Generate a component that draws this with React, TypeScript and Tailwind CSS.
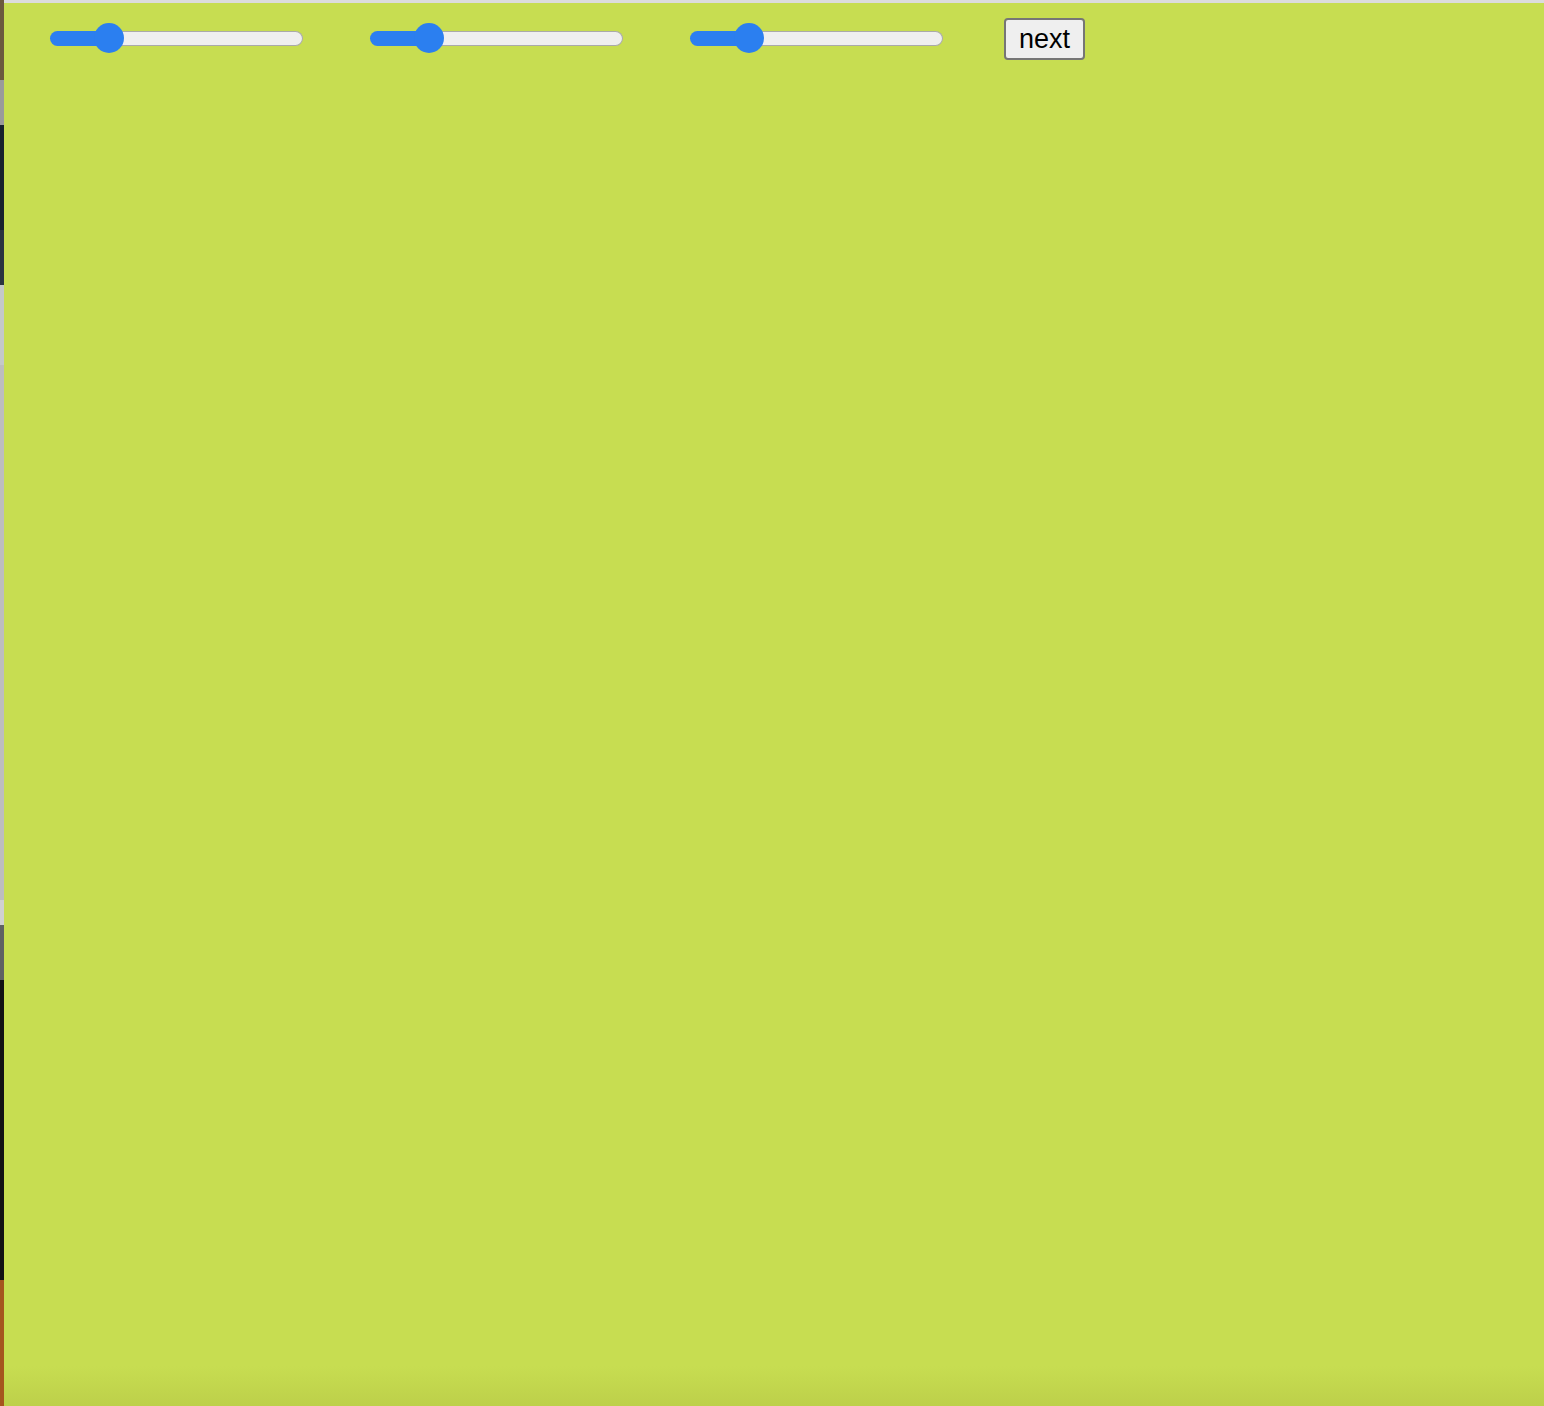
import React from 'react';

const strip = [
  { h: 'h-[80px]', c: 'bg-[#6b5a3e]' },
  { h: 'h-[45px]', c: 'bg-[#9a9a9a]' },
  { h: 'h-[105px]', c: 'bg-[#18222d]' },
  { h: 'h-[55px]', c: 'bg-[#2a3440]' },
  { h: 'h-[80px]', c: 'bg-[#c4c8c8]' },
  { h: 'h-[535px]', c: 'bg-[#bdbdbd]' },
  { h: 'h-[25px]', c: 'bg-[#d0d0d0]' },
  { h: 'h-[55px]', c: 'bg-[#5f6163]' },
  { h: 'h-[300px]', c: 'bg-[#111214]' },
  { h: 'h-[126px]', c: 'bg-[#a5561e]' },
];

function Slider({ pos }: { pos: number }) {
  return (
    <div className="relative mt-[5px] w-[253px] h-[30px] flex items-center">
      <div className="flex w-full h-[15px]">
        <div className="h-full rounded-l-full bg-[#2b7ff0]" style={{ width: pos + 6 }} />
        <div className="flex-1 h-full rounded-r-full border-[1.5px] border-l-0 border-[#aaaaaa] bg-[#efefef]" />
      </div>
      <div
        className="absolute top-0 w-[30px] h-[30px] rounded-full bg-[#2b7ff0]"
        style={{ left: pos - 15 }}
      />
    </div>
  );
}

export default function App() {
  return (
    <div className="flex w-[1544px] h-[1406px] overflow-hidden font-['Liberation_Sans',Arial,sans-serif]">
      <div className="flex flex-col w-[4px] shrink-0">
        {strip.map((s, i) => (
          <div key={i} className={`${s.h} ${s.c} shrink-0`} />
        ))}
      </div>
      <div className="flex-1 flex flex-col">
        <div className="h-[3px] bg-[#dcdcdc] shrink-0" />
        <div className="flex-1 flex flex-col bg-[#c7dd51]">
          <div className="flex items-start pt-[15px] pl-[46px]">
            <Slider pos={59} />
            <div className="ml-[67px]">
              <Slider pos={59} />
            </div>
            <div className="ml-[67px]">
              <Slider pos={59} />
            </div>
            <button className="ml-[61px] w-[81px] h-[42px] rounded-[4px] border-2 border-[#767676] bg-[#efefef] text-[27px] leading-none text-black">
              next
            </button>
          </div>
          <div className="flex-1" />
          <div className="h-[40px] bg-gradient-to-b from-[#c7dd51] to-[#bdd04a]" />
        </div>
      </div>
    </div>
  );
}
